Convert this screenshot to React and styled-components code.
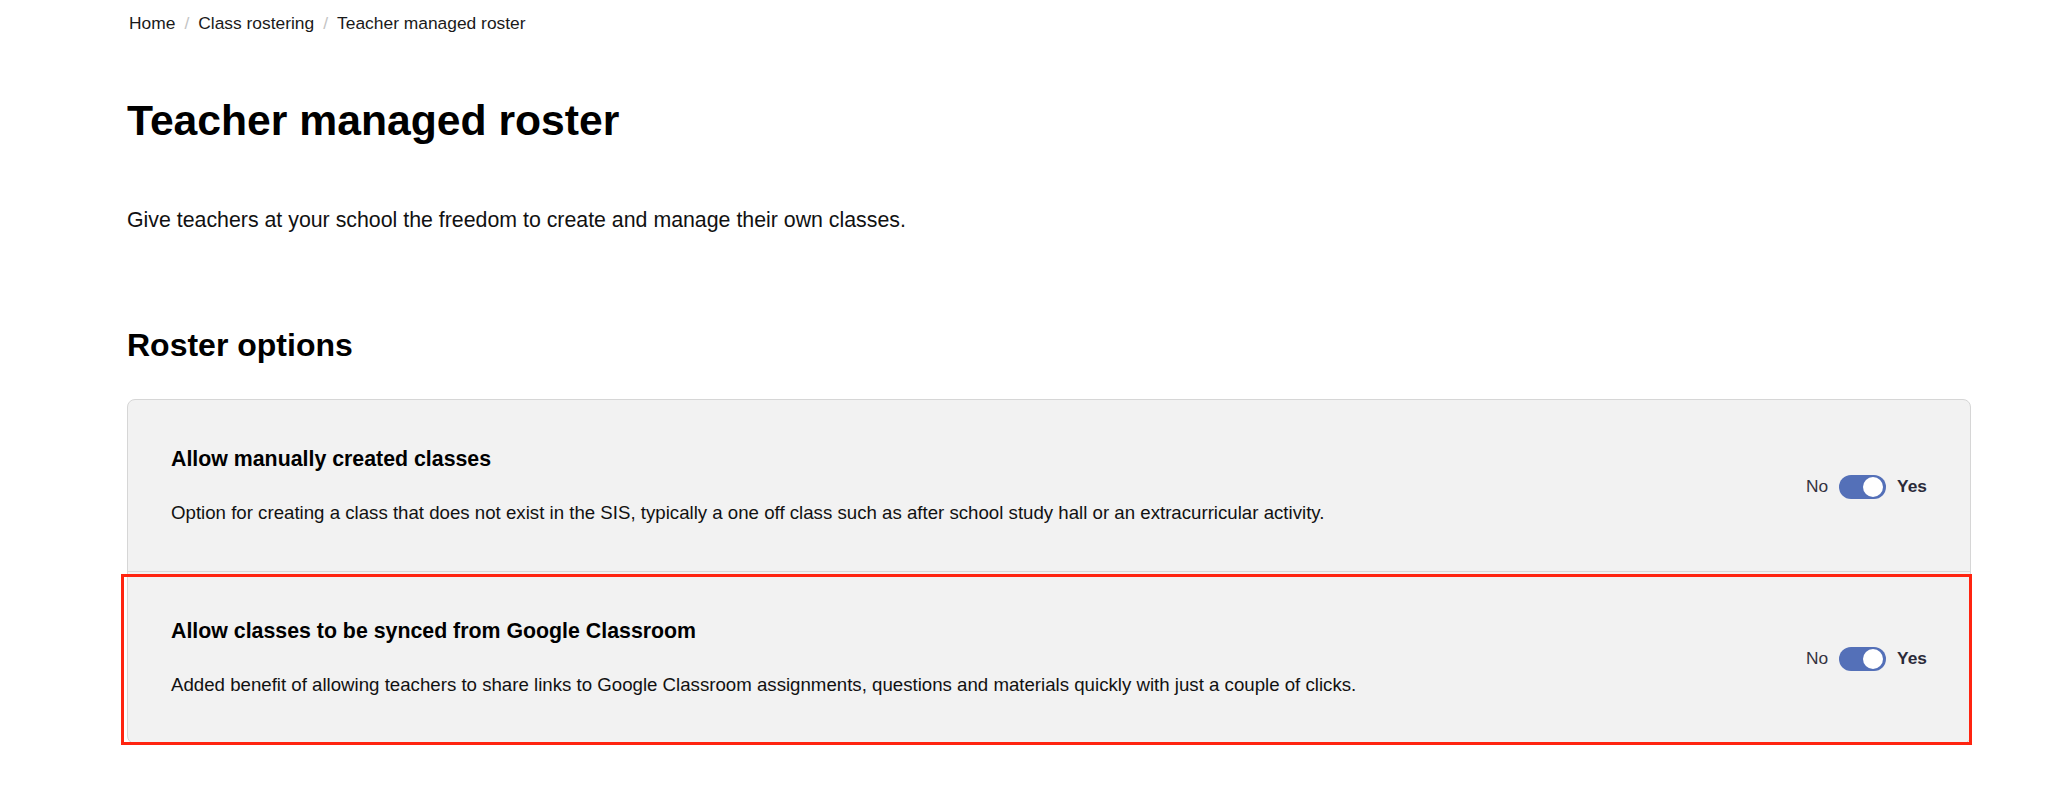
import React, { useState } from "react";
import styled, { createGlobalStyle } from "styled-components";

const Global = createGlobalStyle`
  html, body { margin: 0; padding: 0; background: #ffffff; }
  body { font-family: "Liberation Sans", Arial, Helvetica, sans-serif; color: #111; }
  * { box-sizing: border-box; }
`;

const Page = styled.main`
  padding: 11px 75px 40px 127px;
`;

const Crumbs = styled.nav`
  display: flex;
  align-items: center;
  font-size: 17.4px;
  line-height: 25.5px;
  color: #1a1a1a;
  padding-left: 2px;
`;

const Crumb = styled.span`
  color: #1a1a1a;
  & + &::before {
    content: "/";
    color: #c4c4c4;
    padding: 0 9px 0 9px;
  }
`;

const Title = styled.h1`
  margin: 58px 0 0;
  font-size: 42.67px;
  line-height: 51px;
  font-weight: 700;
  color: #000;
`;

const Lead = styled.p`
  margin: 58.5px 0 0;
  font-size: 21.33px;
  line-height: 32px;
  color: #111;
`;

const SectionTitle = styled.h2`
  margin: 90px 0 0;
  font-size: 32px;
  line-height: 38.4px;
  font-weight: 700;
  color: #000;
`;

const Card = styled.section`
  margin-top: 35px;
  width: 1844px;
  background: #f2f2f2;
  border: 1px solid #d6d6d6;
  border-radius: 8px;
`;

const Row = styled.div`
  position: relative;
  display: flex;
  align-items: center;
  justify-content: space-between;
  padding: 47px 43px 42px 43px;
  & + & { border-top: 1px solid #d9d9d9; }
  ${(p) =>
    p.$highlight &&
    `
    &::after {
      content: "";
      position: absolute;
      top: 2px;
      bottom: -2px;
      left: -7px;
      right: -2px;
      border: 3px solid #ff2410;
      pointer-events: none;
    }
  `}
`;

const RowText = styled.div`
  display: flex;
  flex-direction: column;
`;

const RowTitle = styled.h3`
  margin: 0;
  font-size: 21.33px;
  line-height: 25.6px;
  font-weight: 700;
  color: #000;
`;

const RowDesc = styled.p`
  margin: 24.4px 0 0;
  font-size: 18.67px;
  line-height: 32px;
  color: #111;
`;

const ToggleGroup = styled.div`
  display: flex;
  align-items: center;
  gap: 11px;
  font-size: 17.33px;
  color: #333340;
  margin-top: -3px;
`;

const Label = styled.span`
  font-weight: ${(p) => (p.$strong ? 700 : 400)};
  color: ${(p) => (p.$strong ? "#2b2b3a" : "#333340")};
`;

const Switch = styled.button`
  position: relative;
  width: 47px;
  height: 24px;
  border-radius: 12px;
  border: none;
  padding: 0;
  cursor: pointer;
  background: ${(p) => (p.$on ? "#5470b8" : "#b8b8c0")};
  &::after {
    content: "";
    position: absolute;
    top: 2px;
    left: ${(p) => (p.$on ? "24px" : "2px")};
    width: 20px;
    height: 20px;
    border-radius: 50%;
    background: #fff;
    box-shadow: 0 0 0 1px #5470b8;
  }
`;

function Toggle({ initial = true }) {
  const [on, setOn] = useState(initial);
  return (
    <ToggleGroup>
      <Label>No</Label>
      <Switch $on={on} aria-pressed={on} onClick={() => setOn(!on)} />
      <Label $strong>Yes</Label>
    </ToggleGroup>
  );
}

const options = [
  {
    title: "Allow manually created classes",
    desc: "Option for creating a class that does not exist in the SIS, typically a one off class such as after school study hall or an extracurricular activity.",
  },
  {
    title: "Allow classes to be synced from Google Classroom",
    desc: "Added benefit of allowing teachers to share links to Google Classroom assignments, questions and materials quickly with just a couple of clicks.",
    highlight: true,
  },
];

export default function App() {
  return (
    <>
      <Global />
      <Page>
        <Crumbs>
          <Crumb>Home</Crumb>
          <Crumb>Class rostering</Crumb>
          <Crumb>Teacher managed roster</Crumb>
        </Crumbs>
        <Title>Teacher managed roster</Title>
        <Lead>Give teachers at your school the freedom to create and manage their own classes.</Lead>
        <SectionTitle>Roster options</SectionTitle>
        <Card>
          {options.map((o) => (
            <Row key={o.title} $highlight={o.highlight}>
              <RowText>
                <RowTitle>{o.title}</RowTitle>
                <RowDesc>{o.desc}</RowDesc>
              </RowText>
              <Toggle />
            </Row>
          ))}
        </Card>
      </Page>
    </>
  );
}
